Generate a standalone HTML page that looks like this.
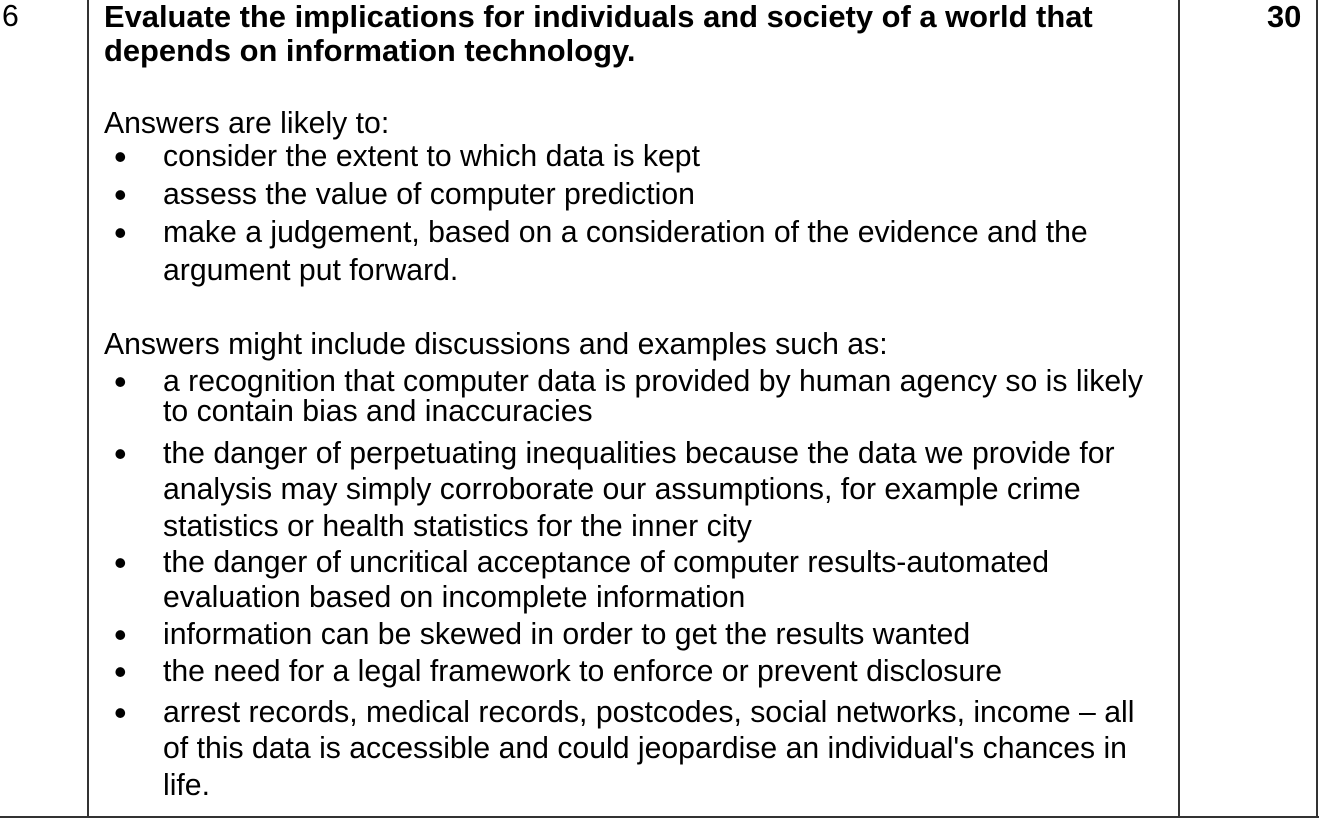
<!DOCTYPE html>
<html><head><meta charset="utf-8"><style>
html,body{margin:0;padding:0;background:#fff;}
body{width:1319px;height:819px;position:relative;overflow:hidden;font-family:"Liberation Sans",Arial,sans-serif;font-size:30.2px;color:#000;}
.l{position:absolute;white-space:nowrap;line-height:32px;}
.v{position:absolute;top:0;width:2px;height:818px;background:#333;}
.b{position:absolute;left:114px;font-size:36px;}
.t{font-weight:bold;font-size:30.9px;}
</style></head><body>
<div class="v" style="left:87px"></div>
<div class="v" style="left:1178px"></div>
<div class="v" style="left:1316px"></div>
<div style="position:absolute;left:0;top:816px;width:1319px;height:2px;background:#333"></div>

<div class="l" style="left:2px;top:1px">6</div>
<div class="l t" style="left:1267px;top:1px">30</div>
<div class="l t" style="left:104px;top:1px">Evaluate the implications for individuals and society of a world that</div>
<div class="l t" style="left:104px;top:35px">depends on information technology.</div>

<div class="l" style="left:104px;top:108px">Answers are likely to:</div>
<div class="l b" style="top:141px">•</div><div class="l" style="left:163px;top:141px">consider the extent to which data is kept</div>
<div class="l b" style="top:179px">•</div><div class="l" style="left:163px;top:179px">assess the value of computer prediction</div>
<div class="l b" style="top:217px">•</div><div class="l" style="left:163px;top:217px">make a judgement, based on a consideration of the evidence and the</div>
<div class="l" style="left:163px;top:255px">argument put forward.</div>

<div class="l" style="left:104px;top:329px">Answers might include discussions and examples such as:</div>
<div class="l b" style="top:366px">•</div><div class="l" style="left:163px;top:366px">a recognition that computer data is provided by human agency so is likely</div>
<div class="l" style="left:163px;top:396px">to contain bias and inaccuracies</div>
<div class="l b" style="top:438px">•</div><div class="l" style="left:163px;top:438px">the danger of perpetuating inequalities because the data we provide for</div>
<div class="l" style="left:163px;top:474px">analysis may simply corroborate our assumptions, for example crime</div>
<div class="l" style="left:163px;top:511px">statistics or health statistics for the inner city</div>
<div class="l b" style="top:547px">•</div><div class="l" style="left:163px;top:547px">the danger of uncritical acceptance of computer results-automated</div>
<div class="l" style="left:163px;top:582px">evaluation based on incomplete information</div>
<div class="l b" style="top:619px">•</div><div class="l" style="left:163px;top:619px">information can be skewed in order to get the results wanted</div>
<div class="l b" style="top:656px">•</div><div class="l" style="left:163px;top:656px">the need for a legal framework to enforce or prevent disclosure</div>
<div class="l b" style="top:697px">•</div><div class="l" style="left:163px;top:697px">arrest records, medical records, postcodes, social networks, income – all</div>
<div class="l" style="left:163px;top:733px">of this data is accessible and could jeopardise an individual's chances in</div>
<div class="l" style="left:163px;top:770px">life.</div>
</body></html>
